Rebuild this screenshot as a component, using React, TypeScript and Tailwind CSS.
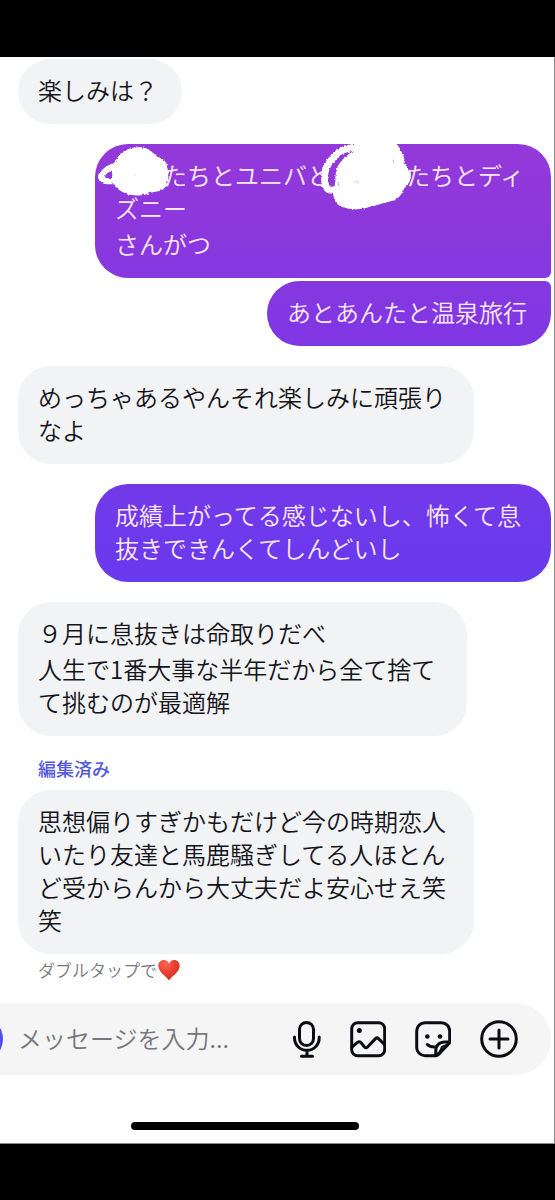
import React from "react";
import clsx from "clsx";

type TMessage = {
  id: number;
  mine?: boolean;
  lines: React.ReactNode[];
  className: string;
  overlay?: React.ReactNode;
};

// White marker strokes that hide the names in a message
const Scribble = () => (
  <svg
    className="pointer-events-none absolute top-0 left-0 h-[134px] w-[456px]"
    viewBox="95 144 456 134"
    fill="none"
    stroke="#fff"
    strokeLinecap="round"
    strokeLinejoin="round"
    aria-hidden="true"
  >
    <defs>
      <filter id="rough" x="-5%" y="-5%" width="110%" height="110%">
        <feTurbulence type="fractalNoise" baseFrequency="0.5" numOctaves="2" seed="4" result="n" />
        <feDisplacementMap in="SourceGraphic" in2="n" xChannelSelector="R" yChannelSelector="G" scale="3" />
      </filter>
    </defs>
    <g filter="url(#rough)">
      <path
        fill="#fff"
        strokeWidth="5"
        d="M116 166C118 160 122 154 128 152C133 149 142 149 146 151C151 153 153 156 156 159C162 160 165 164 165 169C167 176 166 182 162 187C157 190 152 189 148 191C142 194 134 193 129 192C123 190 118 187 116 182C114 176 114 171 116 166Z"
      />
      <path strokeWidth="6" d="M118 165C110 167 104 171 101 176C101 181 105 182 118 181" />
      <path
        fill="#fff"
        strokeWidth="5"
        d="M338 180C337 172 341 163 348 158C354 152 362 151 370 149C378 147 386 143 393 142C396 148 401 153 402 160C402 166 404 169 408 173C410 178 406 184 402 187C400 193 396 198 390 199C383 200 378 203 371 204C363 207 352 208 344 205C336 203 334 193 337 187Z"
      />
      <path strokeWidth="7" d="M337 189C328 192 326 189 325 183C323 172 327 164 333 158C339 150 347 148 357 147C369 146 380 145 392 145" />
    </g>
    <g stroke="#cfa6ef" strokeWidth="1">
      <path d="M338 182L339 186M356 181L358 183M393 160L394 163M135 175L135 175" />
    </g>
  </svg>
);

const messages: TMessage[] = [
  { id: 1, lines: ["楽しみは？"], className: "" },
  {
    id: 2,
    mine: true,
    lines: [
      <>
        <span className="inline-block w-12" />
        たちとユニバと
        <span className="inline-block w-[75px]" />
        たちとディ
        <br />
        ズニー
      </>,
      "さんがつ",
    ],
    className: "mt-5 w-[456px] rounded-br-md from-[#9439d9] to-[#8637e0]",
    overlay: <Scribble />,
  },
  {
    id: 3,
    mine: true,
    lines: ["あとあんたと温泉旅行"],
    className: "mt-[3px] rounded-tr-md from-[#8638df] to-[#7e37e4]",
  },
  { id: 4, lines: ["めっちゃあるやんそれ楽しみに頑張りなよ"], className: "mt-5" },
  {
    id: 5,
    mine: true,
    lines: ["成績上がってる感じないし、怖くて息抜きできんくてしんどいし"],
    className: "mt-5 from-[#7339e8] to-[#683aef]",
  },
  {
    id: 6,
    lines: ["９月に息抜きは命取りだべ", "人生で1番大事な半年だから全て捨てて挑むのが最適解"],
    className: "mt-5 w-[449px]",
  },
];

const Bubble = ({ message }: { message: TMessage }) => (
  <li
    className={clsx(
      "relative max-w-[456px] rounded-[33px] pt-[14px] pr-6 pb-[18px] pl-5 text-[24px] leading-[33px]",
      message.mine
        ? "self-end overflow-hidden bg-linear-to-b text-[#fbe9ff]"
        : "self-start bg-[#f2f3f5] text-[#14151a]",
      message.className
    )}
  >
    {message.lines.map((line, i) => (
      <p key={i} className={i > 0 ? "mt-[3px]" : ""}>
        {line}
      </p>
    ))}
    {message.overlay}
  </li>
);

const Heart = () => (
  <svg className="h-6 w-6" viewBox="0 0 24 24" role="img" aria-label="ハート">
    <defs>
      <radialGradient id="heart" cx="0.35" cy="0.2" r="0.9">
        <stop offset="0" stopColor="#f76a55" />
        <stop offset="0.5" stopColor="#e93d2f" />
        <stop offset="1" stopColor="#c92a22" />
      </radialGradient>
    </defs>
    <path
      fill="url(#heart)"
      d="M12 22.5C10.500 19 1.300 14.500 1.300 8C1.300 4.500 3.700 2 6.800 2C9.300 2 11.300 3.500 12 5.800C12.700 3.500 14.700 2 17.200 2C20.300 2 22.700 4.500 22.700 8C22.700 14.500 13.500 19 12 22.500Z"
    />
  </svg>
);

const App = () => {
  return (
    <div
      lang="ja"
      className="flex min-h-screen flex-col bg-black font-['Noto_Sans_CJK_JP',sans-serif] font-[350]"
    >
      <div className="h-[57px] shrink-0" />

      <main className="flex grow flex-col border-r border-b border-[#8a8a8a] bg-white">
        {/* Messages */}
        <ul className="flex flex-col pt-[2px] pr-[3px] pl-[18px]">
          {messages.map((m) => (
            <Bubble key={m.id} message={m} />
          ))}
          <li className="mt-5 flex flex-col items-start">
            <span className="pl-5 text-[18px] leading-6 font-medium text-[#5359dc]">編集済み</span>
            <p className="mt-[10px] max-w-[456px] rounded-[33px] bg-[#f2f3f5] pt-[14px] pr-6 pb-[18px] pl-5 text-[24px] leading-[33px] text-[#14151a]">
              思想偏りすぎかもだけど今の時期恋人いたり友達と馬鹿騒ぎしてる人ほとんど受からんから大丈夫だよ安心せえ笑笑
            </p>
            <span className="mt-1 flex items-center pl-5 text-[17px] leading-6 text-[#77777c]">
              ダブルタップで
              <Heart />
            </span>
          </li>
        </ul>

        {/* Composer */}
        <form className="relative mt-[21px] mr-[3px] flex h-[72px] items-center overflow-hidden rounded-r-full bg-[#f5f5f6] pr-[33px] pl-[18px]">
          <span className="absolute top-[13px] -left-[43px] h-[46px] w-[46px] rounded-full bg-[#4f4df0]" />
          <input
            type="text"
            aria-label="メッセージ"
            placeholder="メッセージを入力..."
            className="min-w-0 grow bg-transparent pb-1 text-[24px] leading-[33px] outline-none placeholder:text-[#77777c]"
          />
          <div className="flex shrink-0 items-center gap-[29px] text-[#0c0d12]">
            <button type="button" aria-label="音声">
              <svg width="28" height="38" viewBox="0 0 28 38" fill="none" stroke="currentColor" strokeWidth="3" strokeLinecap="round" strokeLinejoin="round">
                <rect x="6.500" y="2.500" width="14" height="23" rx="7" />
                <path d="M1.500 17V18A12.300 12.300 0 0 0 26.200 18V17M14 31V36M8.500 36.200H19.500" />
              </svg>
            </button>
            <button type="button" aria-label="写真">
              <svg width="36" height="38" viewBox="0 0 36 38" fill="none" stroke="currentColor" strokeWidth="3" strokeLinecap="round" strokeLinejoin="round">
                <rect x="1.700" y="2.700" width="33" height="33" rx="6" />
                <path d="M2 27L7.500 22.400Q9.300 21 11 22.600L14.500 27Q16 28.500 17.500 27L25.500 18.600Q27 17.200 28.500 18.600L34.500 24.500" />
                <circle cx="9.300" cy="10.500" r="2.500" fill="currentColor" stroke="none" />
              </svg>
            </button>
            <button type="button" aria-label="スタンプ">
              <svg width="36" height="38" viewBox="0 0 36 38" fill="none" stroke="currentColor" strokeWidth="3" strokeLinecap="round" strokeLinejoin="round">
                <path d="M21 35.700H10A8.300 8.300 0 0 1 1.700 27.400V11A8.300 8.300 0 0 1 10 2.700H26.400A8.300 8.300 0 0 1 34.700 11V21.500Q34.700 22.800 33.800 23.800L23.300 34.600Q22.300 35.700 21 35.700Z" />
                <path d="M20.800 35.200V31C20.800 25.500 24.500 22 30 22H34.300" />
                <path d="M21 35C27 32 25 29 27 27C29 25.500 32 26 34 22.500" strokeWidth="2" />
                <path d="M12.300 24.500Q15 27.300 20.500 27" />
                <circle cx="12.300" cy="16.500" r="2.300" fill="currentColor" stroke="none" />
                <circle cx="25" cy="16.500" r="2.300" fill="currentColor" stroke="none" />
              </svg>
            </button>
            <button type="button" aria-label="追加">
              <svg width="38" height="38" viewBox="0 0 38 38" fill="none" stroke="currentColor" strokeWidth="3" strokeLinecap="round">
                <circle cx="19" cy="19" r="17.300" />
                <path d="M19 10V28M10 19H28" />
              </svg>
            </button>
          </div>
        </form>

        {/* Home indicator */}
        <div className="mt-auto mb-[13px] flex justify-center pr-16">
          <div className="h-2 w-[228px] rounded-full bg-black" />
        </div>
      </main>

      <div className="h-14 shrink-0" />
    </div>
  );
};

export default App;
